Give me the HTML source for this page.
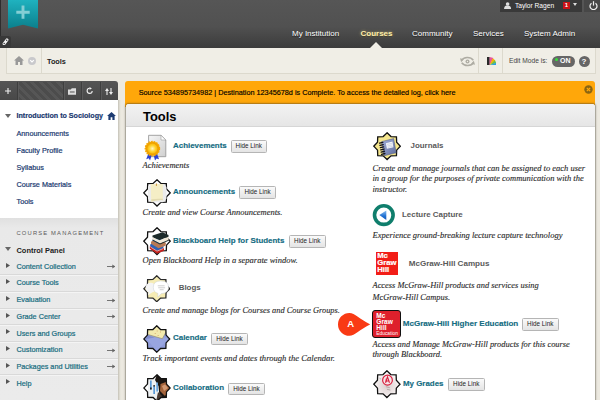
<!DOCTYPE html>
<html><head><meta charset="utf-8"><title>Tools</title>
<style>
*{box-sizing:border-box;margin:0;padding:0}
html,body{width:600px;height:400px;overflow:hidden}
body{position:relative;background:#ece9e0;font-family:"Liberation Sans",Arial,sans-serif;font-size:7.25px;color:#222}
.a{position:absolute;white-space:nowrap}
.t{position:absolute;white-space:nowrap;line-height:10px;height:10px}
/* header */
#hdr{left:0;top:0;width:600px;height:47.6px;background:linear-gradient(#565656 0,#515151 55%,#3b3b3b 100%)}
#hdrL{left:0;top:0;width:1px;height:48px;background:#2e2e2e}
#ribbon{left:8px;top:0;width:30px;height:29px}
#lnk{left:0;top:36.2px;width:10.5px;height:11.4px;background:#383838;border-top-right-radius:2.5px}
#user{left:499.5px;top:0;width:82.2px;height:11.5px;background:#393939}
#pwr{left:584.3px;top:0;width:15.7px;height:11.5px;background:#474747}
.nav{color:#fff;font-size:8px;top:28.8px;text-shadow:0 1px 1px #222}
/* breadcrumb */
#bc{left:6px;top:47.6px;width:590px;height:26.8px;border:1px solid #dcd9cd;border-top:0;background:#f0eee6}
.bcd{top:48px;width:1px;height:26px;background:#dcd9cd}
/* sidebar */
#sbt{left:0;top:81.2px;width:118.2px;height:18.4px;background:linear-gradient(#555,#484848);border-top-right-radius:3px}
#sbb{left:0;top:100px;width:118px;height:118px;background:#fff}
#sbs{left:118px;top:100px;width:3px;height:300px;background:linear-gradient(90deg,#c4c1b7,#dddad0 50%,#eeece3)}
#cm{left:0;top:218px;width:118px;height:182px;background:linear-gradient(#e0e0e0 0,#e9e9e9 10px,#ebebeb 100%)}
.mi{left:16.5px;color:#1a3970;font-size:7.25px;-webkit-text-stroke:.2px #1a3970}
.cp{left:16.5px;color:#176c80;font-size:7.25px;-webkit-text-stroke:.2px #176c80}
.cpl{left:0;width:118px;height:1px;background:#d9d9d9;border-bottom:.5px solid #f4f4f4;box-sizing:content-box}
.tri{width:0;height:0;border-left:4px solid #555;border-top:2.5px solid transparent;border-bottom:2.5px solid transparent;left:5px}
.arr{left:105px;color:#555;font-size:8px}
/* content */
#ban{left:125.2px;top:81px;width:470.2px;height:26px;background:#ffa70a;border-radius:3px 3px 0 0}
#pan{left:126px;top:104px;width:468.5px;height:300px;background:#fff;border-radius:3px 3px 0 0;box-shadow:0 0 1.5px 0.5px rgba(60,55,40,.45)}
#ph{left:126px;top:104px;width:468.5px;height:22.5px;background:linear-gradient(#f2f2f2,#e6e6e6);border-radius:3px 3px 0 0;border-bottom:1px solid #d6d6d6}
.lk{color:#146c82;font-weight:bold;font-size:7.93px;-webkit-text-stroke:.15px #146c82}
.gk{color:#5a5a5a;font-weight:bold;font-size:7.93px}
.ds{font-family:"Liberation Serif",serif;font-style:italic;font-size:8.5px;color:#2b2b2b;-webkit-text-stroke:.12px #2b2b2b;line-height:10.6px;white-space:nowrap;position:absolute}
.btn{position:absolute;height:12.5px;width:36.5px;border:1px solid #b5b5b5;border-radius:1.5px;background:linear-gradient(#fafafa,#e4e4e4);font-size:6.3px;line-height:10.5px;text-align:center;color:#222;white-space:nowrap}
</style></head><body>
<!-- HEADER -->
<div class="a" id="hdr"></div><div class="a" id="hdrL"></div>
<svg class="a" id="ribbon" viewBox="0 0 30 29"><defs><linearGradient id="rg" x1="0" y1="0" x2="0" y2="1"><stop offset="0" stop-color="#1fb2bf"/><stop offset="1" stop-color="#0b7f8c"/></linearGradient></defs><path d="M0 0H30V28.6L15 24.8L0 28.6Z" fill="url(#rg)"/><path d="M15 5.6V18.8M8.3 12.2H21.7" stroke="#84ced4" stroke-width="2.9" fill="none"/></svg>
<div class="a" id="lnk"></div>
<svg class="a" style="left:1.5px;top:37.8px;width:7px;height:7.6px" viewBox="0 0 7 7.6"><path d="M2 5.8L5 1.8" stroke="#f2f2f2" stroke-width="2.9" stroke-linecap="round"/><circle cx="2.2" cy="5.5" r=".75" fill="#383838"/><circle cx="4.7" cy="2.2" r=".75" fill="#383838"/></svg>
<div class="a" id="user"></div><div class="a" id="pwr"></div>
<svg class="a" style="left:504.4px;top:1.5px;width:7.2px;height:7px" viewBox="0 0 7 7"><circle cx="3.5" cy="2" r="1.8" fill="#ddd"/><path d="M0 7C0 4 2 3.6 3.5 3.6S7 4 7 7Z" fill="#ddd"/></svg>
<div class="t" style="left:515px;top:0.5px;color:#fff;font-size:6.65px">Taylor Ragen</div>
<div class="a" style="left:563px;top:1.5px;width:6.6px;height:7.4px;background:#cc1216;color:#fff;font-size:6px;font-weight:bold;line-height:7.5px;text-align:center">1</div>
<div class="a" style="left:573.2px;top:2.8px;width:0;height:0;border-top:3.2px solid #ddd;border-left:2.7px solid transparent;border-right:2.7px solid transparent"></div>
<svg class="a" style="left:588.6px;top:0.8px;width:9px;height:9px" viewBox="0 0 9 9"><path d="M2.5 2.2A3.5 3.5 0 1 0 6.5 2.2" stroke="#eee" stroke-width="1.2" fill="none"/><path d="M4.5 0.2V4.6" stroke="#eee" stroke-width="1.2"/></svg>
<div class="t nav" style="left:292px">My Institution</div>
<div class="t nav" style="left:360.5px;font-weight:bold;color:#ffeeaa;text-shadow:0 0 3px rgba(255,230,140,.6),0 1px 1px #222">Courses</div>
<div class="t nav" style="left:412px">Community</div>
<div class="t nav" style="left:473px">Services</div>
<div class="t nav" style="left:524px">System Admin</div>
<div class="a" style="left:370px;top:42px;width:0;height:0;border-bottom:6px solid #f0eee6;border-left:6px solid transparent;border-right:6px solid transparent"></div>
<!-- BREADCRUMB -->
<div class="a" id="bc"></div>
<div class="a bcd" style="left:41px"></div><div class="a bcd" style="left:478px"></div><div class="a bcd" style="left:501.5px"></div>
<svg class="a" style="left:13.5px;top:55.5px;width:10px;height:9px" viewBox="0 0 10 9"><path d="M5 0L10 4.6H8.5V9H6V6H4V9H1.5V4.6H0Z" fill="#999"/></svg>
<svg class="a" style="left:27.8px;top:56.8px;width:8px;height:8px" viewBox="0 0 8 8"><circle cx="4" cy="4" r="4" fill="#c9c9cc"/><path d="M2.2 3.2L4 5L5.8 3.2" stroke="#fff" stroke-width="1.1" fill="none"/></svg>
<div class="t" style="left:47px;top:57px;font-weight:bold;font-size:7.3px;color:#222">Tools</div>
<svg class="a" style="left:460px;top:56.3px;width:15px;height:11px" viewBox="0 0 15 11"><path d="M1.6 4.4C3.5 0.8 10.5 0.4 13.3 4.3" stroke="#aeaca3" stroke-width="1.5" fill="none"/><path d="M0 2.2L3.8 3.2L1.2 6.3Z" fill="#aeaca3"/><path d="M13.4 6.6C11.5 10.2 4.5 10.6 1.7 6.7" stroke="#aeaca3" stroke-width="1.5" fill="none"/><path d="M15 8.8L11.2 7.8L13.8 4.7Z" fill="#aeaca3"/><circle cx="7.5" cy="5.5" r="2" fill="#aeaca3"/><circle cx="7.5" cy="5.5" r=".7" fill="#efede4"/></svg>
<svg class="a" style="left:486.5px;top:57px;width:9.2px;height:8.3px" viewBox="0 0 9.2 8.3"><rect x="0" y="0" width="2.7" height="8.3" fill="#2a2a2a"/><path d="M2.6 8.3L2.60 0.10L6.45 1.06Z" fill="#e8559c"/><path d="M2.6 8.3L5.69 1.36L8.42 3.41Z" fill="#f5b400"/><path d="M2.6 8.3L7.78 3.30L9.45 6.08Z" fill="#6cc04a"/><path d="M2.6 8.3L8.90 5.75L9.40 8.30Z" fill="#2f9fe0"/></svg>
<div class="t" style="left:509px;top:56px;font-size:6.65px;color:#444">Edit Mode is:</div>
<div class="a" style="left:551.5px;top:55.5px;width:23.5px;height:11.5px;border-radius:6px;background:#666"></div>
<div class="a" style="left:555px;top:57.5px;width:3px;height:3px;border-radius:2px;background:#35e23b"></div>
<div class="t" style="left:560px;top:56px;font-size:7px;font-weight:bold;color:#fff">ON</div>
<div class="a" style="left:578.5px;top:55.5px;width:11px;height:11px;border-radius:6px;background:#666;color:#fff;font-weight:bold;font-size:8px;line-height:11px;text-align:center">?</div>
<!-- SIDEBAR -->
<div class="a" id="sbt"></div>
<div class="a" style="left:18px;top:81.5px;width:45px;height:18px;background:repeating-linear-gradient(45deg,#4c4c4c 0,#4c4c4c 3px,#565656 3px,#565656 6px)"></div>
<div class="a" style="left:17px;top:81.5px;width:2px;height:18px;background:linear-gradient(90deg,#3e3e3e 50%,#5a5a5a 50%)"></div>
<div class="a" style="left:63px;top:81.5px;width:2px;height:18px;background:linear-gradient(90deg,#3e3e3e 50%,#5a5a5a 50%)"></div>
<div class="a" style="left:81px;top:81.5px;width:2px;height:18px;background:linear-gradient(90deg,#3e3e3e 50%,#5a5a5a 50%)"></div>
<div class="a" style="left:100px;top:81.5px;width:2px;height:18px;background:linear-gradient(90deg,#3e3e3e 50%,#5a5a5a 50%)"></div>
<svg class="a" style="left:5.3px;top:88px;width:6px;height:6px" viewBox="0 0 6 6"><path d="M3 0V6M0 3H6" stroke="#eee" stroke-width="1.1"/></svg>
<svg class="a" style="left:68.3px;top:87.5px;width:8.5px;height:7px" viewBox="0 0 9 7"><path d="M0 1.5H3L4 0H8.5V7H0Z" fill="#ddd"/><rect x="2" y="3" width="5" height="2" fill="#4b4b4b" opacity=".5"/></svg>
<svg class="a" style="left:86.3px;top:87px;width:7.5px;height:7.5px" viewBox="0 0 8 8"><path d="M6.6 4.2A2.7 2.7 0 1 1 4 1.4" stroke="#eee" stroke-width="1.2" fill="none"/><path d="M3.8 0L6.3 1.5L3.8 3Z" fill="#eee"/></svg>
<svg class="a" style="left:105px;top:87.5px;width:8px;height:7px" viewBox="0 0 8 7"><path d="M2 7V2.5" stroke="#eee" stroke-width="1.1"/><path d="M0 3L2 0L4 3Z" fill="#eee"/><path d="M6 0V4.5" stroke="#eee" stroke-width="1.1"/><path d="M4 4L6 7L8 4Z" fill="#eee"/></svg>
<div class="a" id="sbb"></div><div class="a" id="sbs"></div>
<svg class="a" style="left:4.5px;top:113.5px;width:6px;height:4px" viewBox="0 0 6 4"><path d="M0 0H6L3 4Z" fill="#666"/></svg>
<div class="t mi" style="top:111.3px;font-weight:bold;font-size:7.15px">Introduction to Sociology</div>
<svg class="a" style="left:106.5px;top:112px;width:9px;height:8px" viewBox="0 0 10 9"><path d="M5 0L10 4.6H8.5V9H6V6H4V9H1.5V4.6H0Z" fill="#1d3b72"/></svg>
<div class="t mi" style="top:128.5px">Announcements</div>
<div class="t mi" style="top:145.5px">Faculty Profile</div>
<div class="t mi" style="top:162.5px">Syllabus</div>
<div class="t mi" style="top:179.8px">Course Materials</div>
<div class="t mi" style="top:197px">Tools</div>
<div class="a" id="cm"></div>
<div class="t" style="left:16.5px;top:227.7px;font-size:5.8px;letter-spacing:1.17px;color:#5a5a5a">COURSE MANAGEMENT</div>
<svg class="a" style="left:4.5px;top:247px;width:6px;height:4px" viewBox="0 0 6 4"><path d="M0 0H6L3 4Z" fill="#666"/></svg>
<div class="t" style="left:16.5px;top:245.5px;font-weight:bold;font-size:7.45px;color:#222">Control Panel</div>
<svg class="a" style="left:5.7px;top:262.5px;width:4px;height:5px" viewBox="0 0 4 5"><path d="M0 0L4 2.5L0 5Z" fill="#555"/></svg><div class="t cp" style="top:261.5px">Content Collection</div><svg class="a" style="left:106.7px;top:264.2px;width:8.5px;height:5px" viewBox="0 0 8.5 5"><path d="M0 2.5H7.5" stroke="#666" stroke-width=".9"/><path d="M5.3 0.5L8.3 2.5L5.3 4.5Z" fill="#666"/></svg>
<div class="a cpl" style="top:274px"></div>
<svg class="a" style="left:5.7px;top:279.0px;width:4px;height:5px" viewBox="0 0 4 5"><path d="M0 0L4 2.5L0 5Z" fill="#555"/></svg><div class="t cp" style="top:278.2px">Course Tools</div>
<div class="a cpl" style="top:291px"></div>
<svg class="a" style="left:5.7px;top:296.0px;width:4px;height:5px" viewBox="0 0 4 5"><path d="M0 0L4 2.5L0 5Z" fill="#555"/></svg><div class="t cp" style="top:295px">Evaluation</div><svg class="a" style="left:106.7px;top:297.7px;width:8.5px;height:5px" viewBox="0 0 8.5 5"><path d="M0 2.5H7.5" stroke="#666" stroke-width=".9"/><path d="M5.3 0.5L8.3 2.5L5.3 4.5Z" fill="#666"/></svg>
<div class="a cpl" style="top:307.5px"></div>
<svg class="a" style="left:5.7px;top:312.5px;width:4px;height:5px" viewBox="0 0 4 5"><path d="M0 0L4 2.5L0 5Z" fill="#555"/></svg><div class="t cp" style="top:311.5px">Grade Center</div><svg class="a" style="left:106.7px;top:314.2px;width:8.5px;height:5px" viewBox="0 0 8.5 5"><path d="M0 2.5H7.5" stroke="#666" stroke-width=".9"/><path d="M5.3 0.5L8.3 2.5L5.3 4.5Z" fill="#666"/></svg>
<div class="a cpl" style="top:324px"></div>
<svg class="a" style="left:5.7px;top:329.0px;width:4px;height:5px" viewBox="0 0 4 5"><path d="M0 0L4 2.5L0 5Z" fill="#555"/></svg><div class="t cp" style="top:328.5px">Users and Groups</div>
<div class="a cpl" style="top:341px"></div>
<svg class="a" style="left:5.7px;top:346.0px;width:4px;height:5px" viewBox="0 0 4 5"><path d="M0 0L4 2.5L0 5Z" fill="#555"/></svg><div class="t cp" style="top:345px">Customization</div><svg class="a" style="left:106.7px;top:347.7px;width:8.5px;height:5px" viewBox="0 0 8.5 5"><path d="M0 2.5H7.5" stroke="#666" stroke-width=".9"/><path d="M5.3 0.5L8.3 2.5L5.3 4.5Z" fill="#666"/></svg>
<div class="a cpl" style="top:357.5px"></div>
<svg class="a" style="left:5.7px;top:362.5px;width:4px;height:5px" viewBox="0 0 4 5"><path d="M0 0L4 2.5L0 5Z" fill="#555"/></svg><div class="t cp" style="top:361.5px">Packages and Utilities</div><svg class="a" style="left:106.7px;top:364.2px;width:8.5px;height:5px" viewBox="0 0 8.5 5"><path d="M0 2.5H7.5" stroke="#666" stroke-width=".9"/><path d="M5.3 0.5L8.3 2.5L5.3 4.5Z" fill="#666"/></svg>
<div class="a cpl" style="top:374px"></div>
<svg class="a" style="left:5.7px;top:379.0px;width:4px;height:5px" viewBox="0 0 4 5"><path d="M0 0L4 2.5L0 5Z" fill="#555"/></svg><div class="t cp" style="top:378.5px">Help</div>
<!-- CONTENT -->
<div class="a" id="ban"></div>
<div class="t" style="left:138.7px;top:88px;font-size:7.28px;color:#000;-webkit-text-stroke:.15px #000">Source 534895734982 | Destination 12345678d is Complete. To access the detailed log, click here</div>
<svg class="a" style="left:584px;top:85px;width:9px;height:9px" viewBox="0 0 9 9"><circle cx="4.5" cy="4.5" r="4.2" fill="#8a6512"/><path d="M2.8 2.8L6.2 6.2M6.2 2.8L2.8 6.2" stroke="#ffa70a" stroke-width="1.2"/></svg>
<div class="a" id="pan"></div><div class="a" id="ph"></div>
<div class="a" style="left:143px;top:108.8px;font-weight:bold;font-size:12.9px;line-height:16px;color:#000">Tools</div>

<!-- left column -->
<svg class="a" style="left:143.5px;top:134px;width:23px;height:27px" viewBox="0 0 23 27"><defs><linearGradient id="dg" x1="0" y1="0" x2="1" y2="1"><stop offset="0" stop-color="#f6f6f6"/><stop offset="1" stop-color="#cfcfcf"/></linearGradient><radialGradient id="mg"><stop offset="0" stop-color="#fff6c8"/><stop offset=".55" stop-color="#ffd533"/><stop offset="1" stop-color="#f7b100"/></radialGradient></defs><path d="M4.6 1.3H17L21.8 6V22.7H4.6Z" fill="url(#dg)" stroke="#9a9a9a" stroke-width=".9"/><path d="M17 1.3V6H21.8Z" fill="#fff" stroke="#9a9a9a" stroke-width=".6"/><path d="M4.2 20L2.2 25.2L4.8 24.3L6 26.6L8 20.5Z" fill="#2a41d4"/><path d="M9.5 20.5L11 26.6L12.6 24.4L15 25.2L13 19.5Z" fill="#2a41d4"/><circle cx="8.4" cy="14.6" r="7.2" fill="#f3a600" stroke="#f3a600" stroke-width="1.2" stroke-dasharray="1.5 1.2"/><circle cx="8.4" cy="14.6" r="5.5" fill="url(#mg)" stroke="#e69500" stroke-width=".5"/></svg>
<div class="t lk" style="left:173px;top:140.5px">Achievements</div>
<div class="btn" style="left:230.5px;top:140.2px">Hide Link</div>
<div class="ds" style="left:142.5px;top:160px">Achievements</div>

<svg class="a" style="left:143px;top:178.8px;width:28px;height:27.8px" viewBox="0 0 28 28" preserveAspectRatio="none"><path d="M14.0 0.8L17.9 4.5L23.3 4.7L23.5 10.1L27.2 14.0L23.5 17.9L23.3 23.3L17.9 23.5L14.0 27.2L10.1 23.5L4.7 23.3L4.5 17.9L0.8 14.0L4.5 10.1L4.7 4.7L10.1 4.5Z" fill="#fff" stroke="#111" stroke-width="1.3" stroke-linejoin="miter"/><path d="M5 7.5L9 5.5H21L23.5 8V20L20 23.5H8.5L5 20Z" fill="#ececec"/><path d="M7.7 5H19.8V21.3Q14 21 8.3 22.8Z" fill="#f5eec6"/><path d="M8.3 20.5Q14 19.5 19.8 20V21.3Q14 21 8.3 22.8Z" fill="#e3dbb0"/><path d="M13.4 4.5V7" stroke="#c98a2a" stroke-width=".9"/></svg>
<div class="t lk" style="left:173px;top:186.7px">Announcements</div>
<div class="btn" style="left:239.3px;top:186.4px">Hide Link</div>
<div class="ds" style="left:142.5px;top:206.5px">Create and view Course Announcements.</div>

<svg class="a" style="left:143px;top:227.4px;width:28px;height:28.4px" viewBox="0 0 28 28" preserveAspectRatio="none"><path d="M14.0 0.8L17.9 4.5L23.3 4.7L23.5 10.1L27.2 14.0L23.5 17.9L23.3 23.3L17.9 23.5L14.0 27.2L10.1 23.5L4.7 23.3L4.5 17.9L0.8 14.0L4.5 10.1L4.7 4.7L10.1 4.5Z" fill="#fff" stroke="#111" stroke-width="1.3" stroke-linejoin="miter"/><path d="M7 17.5L13 13L21 16L20 22.5L14 24.5L7.5 20Z" fill="#2e62b8"/><path d="M6.8 19L14 23.5L21 20.5V23.5L14 26.3L6.8 21.5Z" fill="#c4201d"/><path d="M7.5 19.8L14 23.8L20.5 21.2" stroke="#f2d8d0" stroke-width=".7" fill="none"/><path d="M8 14.5L13 11.5L23 15.5L22.5 18.5L15.5 21L8 16.5Z" fill="#b87a55"/><path d="M9 13L14 10L22 13.5L16 16.5Z" fill="#3f7fd0"/><path d="M12 14L17 12.5" stroke="#bcd3ee" stroke-width=".8"/><path d="M9.5 8.5L19.5 5.2L25.5 8L25.6 9.5L16.5 13L9.5 10Z" fill="#1d2b2b"/><path d="M9.5 10L16.5 13L25.6 9.5V12.5L17 16.2L9.5 12.3Z" fill="#efe7d6"/><path d="M9.5 12.3L17 16.2L25.6 12.5V13.6L17 17.3L9.5 13.3Z" fill="#1d2b2b"/></svg>
<div class="t lk" style="left:173px;top:235.5px">Blackboard Help for Students</div>
<div class="btn" style="left:289px;top:235.2px">Hide Link</div>
<div class="ds" style="left:142.5px;top:255.3px">Open Blackboard Help in a separate window.</div>

<svg class="a" style="left:142.5px;top:274.5px;width:27.5px;height:27.5px" viewBox="0 0 28 28"><path d="M14.0 0.8L17.9 4.5L23.3 4.7L23.5 10.1L27.2 14.0L23.5 17.9L23.3 23.3L17.9 23.5L14.0 27.2L10.1 23.5L4.7 23.3L4.5 17.9L0.8 14.0L4.5 10.1L4.7 4.7L10.1 4.5Z" fill="#f6ecb4" stroke="#2a2a2a" stroke-width="1.3" stroke-linejoin="miter"/><ellipse cx="7.8" cy="13" rx="5.2" ry="5" fill="#f4f4f4"/><path d="M6 17L5 20.5L9.5 17.5Z" fill="#f4f4f4"/><path d="M10.5 12.5Q10.5 6 18 6Q26 6 26 12.5Q26 18.5 18.5 19L15 22.5L15.2 18.7Q10.5 17.5 10.5 12.5Z" fill="#fff" stroke="#c9cfd6" stroke-width=".5"/><path d="M15 11H22M15.5 13H22.5M17 15H21" stroke="#b9b9b9" stroke-width=".7"/></svg>
<div class="t gk" style="left:178.7px;top:282.5px">Blogs</div>
<div class="ds" style="left:142.5px;top:306px;font-size:8.39px">Create and manage blogs for Courses and Course Groups.</div>

<svg class="a" style="left:143px;top:324.5px;width:27.5px;height:28px" viewBox="0 0 28 28" preserveAspectRatio="none"><defs><clipPath id="cs"><path d="M14.0 0.8L17.9 4.5L23.3 4.7L23.5 10.1L27.2 14.0L23.5 17.9L23.3 23.3L17.9 23.5L14.0 27.2L10.1 23.5L4.7 23.3L4.5 17.9L0.8 14.0L4.5 10.1L4.7 4.7L10.1 4.5Z"/></clipPath></defs><path d="M14.0 0.8L17.9 4.5L23.3 4.7L23.5 10.1L27.2 14.0L23.5 17.9L23.3 23.3L17.9 23.5L14.0 27.2L10.1 23.5L4.7 23.3L4.5 17.9L0.8 14.0L4.5 10.1L4.7 4.7L10.1 4.5Z" fill="#8f9cda"/><g clip-path="url(#cs)"><path d="M2 12L12 9L26 14L14 26Z" fill="#98a5e0"/><path d="M0 0H28L24.8 4.5L19.7 13.7L4.1 9.3L0 9Z" fill="#f3eaae"/><path d="M4.1 9.3L19.7 13.7L24.8 4.5" stroke="#8a8460" stroke-width=".6" fill="none"/><path d="M4 10.3L12 12.5L3 14Z" fill="#6f7cc0" opacity=".6"/></g><path d="M14.0 0.8L17.9 4.5L23.3 4.7L23.5 10.1L27.2 14.0L23.5 17.9L23.3 23.3L17.9 23.5L14.0 27.2L10.1 23.5L4.7 23.3L4.5 17.9L0.8 14.0L4.5 10.1L4.7 4.7L10.1 4.5Z" fill="none" stroke="#111" stroke-width="1.3"/><path d="M12 8.5h.8M15 10.5h.8M17.5 7h.8M14 6h.8" stroke="#c9884a" stroke-width=".8"/></svg>
<div class="t lk" style="left:173px;top:333px">Calendar</div>
<div class="btn" style="left:211.2px;top:332.8px">Hide Link</div>
<div class="ds" style="left:142.5px;top:353.1px;font-size:8.62px">Track important events and dates through the Calendar.</div>

<svg class="a" style="left:143px;top:374.4px;width:28px;height:28px" viewBox="0 0 28 28"><defs><clipPath id="cs2"><path d="M14.0 0.8L17.9 4.5L23.3 4.7L23.5 10.1L27.2 14.0L23.5 17.9L23.3 23.3L17.9 23.5L14.0 27.2L10.1 23.5L4.7 23.3L4.5 17.9L0.8 14.0L4.5 10.1L4.7 4.7L10.1 4.5Z"/></clipPath></defs><path d="M14.0 0.8L17.9 4.5L23.3 4.7L23.5 10.1L27.2 14.0L23.5 17.9L23.3 23.3L17.9 23.5L14.0 27.2L10.1 23.5L4.7 23.3L4.5 17.9L0.8 14.0L4.5 10.1L4.7 4.7L10.1 4.5Z" fill="#fff"/><g clip-path="url(#cs2)"><path d="M5 5H16V26H5Z" fill="#eef1f3"/><path d="M14 0L28 0V14L24 28H17L15.5 12L12 6Z" fill="#1b1613"/><path d="M17.5 10L23 8L28 14L22 22L17 17Z" fill="#a4643c"/><path d="M19 12L22 10.5L25 14L21 17Z" fill="#d39a73"/><path d="M15 18L19 22L17 28H13Z" fill="#4a3a32"/><rect x="7" y="6.5" width="1.7" height="9" fill="#5b9bd8"/><rect x="7" y="13.5" width="1.7" height="2" fill="#222"/><rect x="10.3" y="12" width="1.7" height="8" fill="#5b9bd8"/><rect x="10.3" y="11" width="1.7" height="1.6" fill="#444"/><rect x="13.3" y="8.5" width="1.7" height="9" fill="#6aa6de"/></g><path d="M14.0 0.8L17.9 4.5L23.3 4.7L23.5 10.1L27.2 14.0L23.5 17.9L23.3 23.3L17.9 23.5L14.0 27.2L10.1 23.5L4.7 23.3L4.5 17.9L0.8 14.0L4.5 10.1L4.7 4.7L10.1 4.5Z" fill="none" stroke="#111" stroke-width="1.3"/></svg>
<div class="t lk" style="left:173px;top:383px">Collaboration</div>
<div class="btn" style="left:228.2px;top:382.8px">Hide Link</div>

<!-- right column -->
<svg class="a" style="left:372.7px;top:132.3px;width:28.2px;height:28.4px" viewBox="0 0 28 28" preserveAspectRatio="none"><defs><linearGradient id="jg" x1="0" y1="0" x2="1" y2="1"><stop offset="0" stop-color="#a3b1dc"/><stop offset="1" stop-color="#5f6c9c"/></linearGradient></defs><path d="M14.0 0.8L17.9 4.5L23.3 4.7L23.5 10.1L27.2 14.0L23.5 17.9L23.3 23.3L17.9 23.5L14.0 27.2L10.1 23.5L4.7 23.3L4.5 17.9L0.8 14.0L4.5 10.1L4.7 4.7L10.1 4.5Z" fill="#f5e68e" stroke="#111" stroke-width="1.3" stroke-linejoin="miter"/><path d="M8.5 9.5L20.5 6.5L23 20.5L11 23.5Z" fill="url(#jg)" stroke="#4a557e" stroke-width=".5"/><path d="M12.8 11L19.3 9.4L20.3 15L13.8 16.6Z" fill="#f4f6fb"/><path d="M14 12.3L19 11.1M14.4 13.8L19.4 12.6M14.8 15.2L19.8 14" stroke="#b8bfd4" stroke-width=".5"/><path d="M6.5 11L9.8 10.2M6.9 13.2L10.2 12.4M7.3 15.4L10.6 14.6M7.7 17.6L11 16.8M8.1 19.8L11.4 19M8.5 22L11.8 21.2" stroke="#14141c" stroke-width="1.3" stroke-linecap="round"/></svg>
<div class="t gk" style="left:410.5px;top:140.5px">Journals</div>
<div class="ds" style="left:372.5px;top:162.7px">Create and manage journals that can be assigned to each user<br>in a group for the purposes of private communication with the<br>instructor.</div>

<svg class="a" style="left:372px;top:203px;width:24px;height:24px" viewBox="0 0 24 24"><defs><linearGradient id="lg" x1="0" y1="0" x2="0" y2="1"><stop offset="0" stop-color="#8cc0f2"/><stop offset=".6" stop-color="#1e6fd2"/><stop offset="1" stop-color="#1458b8"/></linearGradient></defs><circle cx="11.8" cy="12.1" r="9.3" fill="#fff" stroke="#0f7e6c" stroke-width="3.6"/><path d="M7.3 12.1L14.3 7.4V17Z" fill="url(#lg)"/></svg>
<div class="t gk" style="left:402px;top:209.5px">Lecture Capture</div>
<div class="ds" style="left:372.5px;top:230.3px">Experience ground-breaking lecture capture technology</div>

<div class="a" style="left:375.5px;top:252px;width:22.5px;height:22.8px;background:#f21d17"></div>
<div class="a" style="left:377.2px;top:253.1px;font-weight:bold;font-size:7.7px;line-height:6.85px;color:#fff;-webkit-text-stroke:.2px #fff">Mc<br>Graw<br>Hill</div>
<div class="t gk" style="left:408.7px;top:259px;font-size:8.08px">McGraw-Hill Campus</div>
<div class="ds" style="left:372.5px;top:279.8px;line-height:11.7px;font-size:8.41px">Access McGraw-Hill products and services using<br>McGraw-Hill Campus.</div>

<svg class="a" style="left:337.8px;top:312.9px;width:32.4px;height:22.8px" viewBox="0 0 32.4 22.8"><path d="M11.4 0A11.4 11.4 0 1 0 11.4 22.8C17 22.8 21.5 16.6 32.2 11.4C21.5 6.2 17 0 11.4 0Z" fill="#f93a14"/></svg>
<div class="a" style="left:347.2px;top:319.4px;font-weight:bold;font-size:9.5px;line-height:10px;color:#fff">A</div>
<div class="a" style="left:372.4px;top:309.7px;width:28.5px;height:28px;background:#de202c;border:1.4px solid #111;border-radius:3px"></div>
<div class="a" style="left:376.3px;top:312.8px;font-weight:bold;font-size:6.6px;line-height:6px;color:#fff">Mc<br>Graw<br>Hill</div>
<div class="a" style="left:376.3px;top:330.9px;font-size:4.85px;line-height:5px;color:#fff">Education</div>
<div class="t lk" style="left:402.7px;top:318.8px;font-size:8.07px">McGraw-Hill Higher Education</div>
<div class="btn" style="left:522px;top:318px">Hide Link</div>
<div class="ds" style="left:372.5px;top:339.2px;line-height:10.2px;font-size:8.43px">Access and Manage McGraw-Hill products for this course<br>through Blackboard.</div>

<svg class="a" style="left:373px;top:370.3px;width:27.8px;height:28.4px" viewBox="0 0 28 28" preserveAspectRatio="none"><defs><radialGradient id="gg" cx=".5" cy=".55" r=".5"><stop offset="0" stop-color="#ddd0d0"/><stop offset=".7" stop-color="#efe8e8"/><stop offset="1" stop-color="#fff"/></radialGradient></defs><path d="M14.0 0.8L17.9 4.5L23.3 4.7L23.5 10.1L27.2 14.0L23.5 17.9L23.3 23.3L17.9 23.5L14.0 27.2L10.1 23.5L4.7 23.3L4.5 17.9L0.8 14.0L4.5 10.1L4.7 4.7L10.1 4.5Z" fill="url(#gg)" stroke="#111" stroke-width="1.3"/><circle cx="14.6" cy="10" r="4.9" fill="#f6e6e8" stroke="#d8203f" stroke-width="1.2"/><path d="M12.6 12.6L14.6 6.8L16.6 12.6M13.2 10.9H16" stroke="#d8203f" stroke-width="1.1" fill="none"/><path d="M13.2 8.5V12" stroke="#d8203f" stroke-width=".8"/><path d="M13 16.5L17 17.5M14 19L17.5 19.8" stroke="#9a8a8a" stroke-width=".6"/><path d="M6.5 8L8 9" stroke="#9a8a8a" stroke-width=".6"/></svg>
<div class="t lk" style="left:403px;top:378.8px">My Grades</div>
<div class="btn" style="left:448px;top:378.2px">Hide Link</div>
</body></html>
